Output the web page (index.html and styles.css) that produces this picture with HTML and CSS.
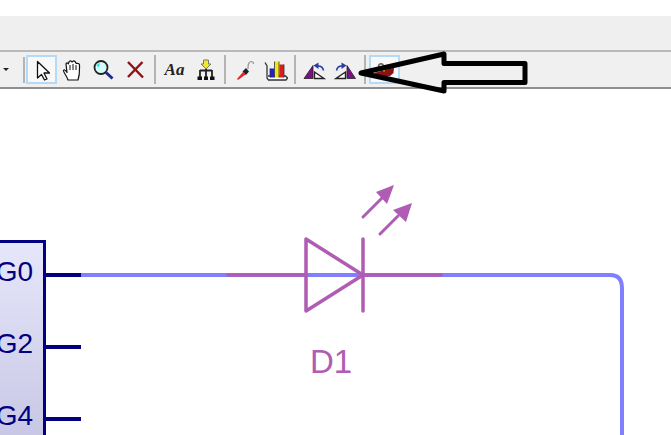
FILE: index.html
```html
<!DOCTYPE html>
<html lang="en">
<head>
  <meta charset="UTF-8">
  <title>LED schematic</title>
  <link rel="stylesheet" href="styles.css">
</head>
<body>
<div class="window">
  <div class="top-gap"></div>
  <div class="menu-band"></div>

  <div class="toolbar">
    <span class="drop-arrow"></span>
    <span class="grip"></span>

    <button class="tool tool-on">
      <svg width="16" height="22" viewBox="0 0 16 22"><path d="M3.500 2.500V19L7.500 15.500L10.500 21L13 20L10 14H15.500Z" fill="#fff" stroke="#111" stroke-width="1.300" stroke-linejoin="round"/></svg>
    </button>
    <button class="tool">
      <svg width="22" height="24" viewBox="0 0 22 24"><path d="M6 22C5 18 1 14 1.500 12.500C2.500 11 4 13 5 14.500L4 6C4 4.500 6 4.500 6.300 6L7 4C7.500 2.500 9.500 2.500 10 4L10.800 3.500C11.500 2.500 13.500 3 13.500 4.500L14.500 5.500C15.500 5 17.500 5.500 17.500 7C17.500 12 18 16 16 22Z" fill="#fff" stroke="#111" stroke-width="1.200" stroke-linejoin="round"/><path d="M8 7V12M11 6V12M14 7V12" stroke="#111" stroke-width="1"/></svg>
    </button>
    <button class="tool">
      <svg width="22" height="24" viewBox="0 0 22 24"><circle cx="8" cy="9.500" r="6.500" fill="#d6fbfb" stroke="#222" stroke-width="1.800"/><path d="M3.500 8C4 6.500 5.500 5.300 7 5L6 9Z" fill="#25e0e8"/><path d="M13 14.500L19.500 20.500" stroke="#1a2a8c" stroke-width="3"/></svg>
    </button>
    <button class="tool">
      <svg width="20" height="22" viewBox="0 0 20 22"><path d="M3 3L18 18.500M17.500 3L3 18" stroke="#8f1418" stroke-width="2.500"/></svg>
    </button>
    <span class="sep sep-first"></span>

    <button class="tool"><span class="aa">Aa</span></button>
    <button class="tool">
      <svg width="22" height="24" viewBox="0 0 22 24"><path d="M8.500 2H13.500V6H16L11 11L6 6H8.500Z" fill="#f5e62a" stroke="#777" stroke-width="1"/><path d="M5 12V19M11 11V19M17 12V19M5 12.500H17" stroke="#222" stroke-width="1.800"/><path d="M2.500 18.500H7V22H2.500ZM9 18.500H13V22H9ZM15 18.500H19.500V22H15Z" fill="#111"/></svg>
    </button>
    <span class="sep"></span>

    <button class="tool">
      <svg width="20" height="24" viewBox="0 0 20 24"><path d="M2 21L8 14L10.500 16.500L3 22Z" fill="#e8232a"/><path d="M7.500 13.500L11 17L14 13.500L11 10Z" fill="#222"/><path d="M13 11C13 7 13 4 16 3.500C18 3.500 18.500 5 18.500 6" fill="none" stroke="#999" stroke-width="1.200"/></svg>
    </button>
    <button class="tool">
      <svg width="24" height="24" viewBox="0 0 24 24"><path d="M1 4.500L3 8V20L4.500 22H22L23.500 20L21.500 18H4" fill="#fff" stroke="#333" stroke-width="1.300"/><rect x="6" y="10.500" width="4.500" height="9" fill="#1f1fd8"/><rect x="10.500" y="3.500" width="4.500" height="16" fill="#f2e51c"/><rect x="15.500" y="6.500" width="4.500" height="13" fill="#d81f1f"/><path d="M6 19.500V10.500M10.500 19.500V3.500M15 19.500V3.500M20 19.500V6.500" stroke="#333" stroke-width=".8"/></svg>
    </button>
    <span class="sep"></span>

    <button class="tool">
      <svg width="24" height="24" viewBox="0 0 24 24"><path d="M1 20.500L10 7.500V20.500Z" fill="#7a0f86" stroke="#222" stroke-width=".8"/><path d="M11.500 20.500V14L21 20.500Z" fill="#fff" stroke="#222" stroke-width="1.400"/><path d="M20.500 12.500C20 9.500 18 8 15 8" fill="none" stroke="#2c3aa8" stroke-width="1.600"/><path d="M15.500 4.500L10.500 7.500L15.500 11Z" fill="#2c3aa8"/></svg>
    </button>
    <button class="tool">
      <svg width="24" height="24" viewBox="0 0 24 24"><path d="M21.500 20.500L13 7.500V20.500Z" fill="#7a0f86" stroke="#222" stroke-width=".8"/><path d="M11.500 20.500V14L2 20.500Z" fill="#fff" stroke="#222" stroke-width="1.400"/><path d="M2.500 12.500C3 9.500 5 8 8 8" fill="none" stroke="#2c3aa8" stroke-width="1.600"/><path d="M7.500 4.500L12.500 7.500L7.500 11Z" fill="#2c3aa8"/></svg>
    </button>
    <span class="sep"></span>

    <button class="tool tool-on">
      <svg width="24" height="22" viewBox="0 0 24 22"><path d="M5.500 8C5.500 3.500 10.500 3.500 10.500 8" fill="none" stroke="#666" stroke-width="1.500"/><path d="M1 14L21 8.500L20.500 14L17 17H6Z" fill="#8f1010"/><circle cx="11" cy="11.500" r="1" fill="#e8e020"/></svg>
    </button>
  </div>

  <div class="canvas">
    <div class="chip">
      <div class="pin"><span class="pin-name">G0</span><span class="pin-lead"></span></div>
      <div class="pin"><span class="pin-name">G2</span><span class="pin-lead"></span></div>
      <div class="pin"><span class="pin-name">G4</span><span class="pin-lead"></span></div>
    </div>

    <svg class="wires" width="671" height="346" viewBox="0 89 671 346">
      <path d="M81 275H610Q622 275 622 288V435" fill="none" stroke="#8080ff" stroke-width="4"/>
      <g fill="none" stroke="#b05cb4" stroke-width="3.500" stroke-linecap="round" stroke-linejoin="round">
        <path d="M228 275H305M363 275H441"/>
        <path d="M306 239V311L363 275Z"/>
        <path d="M363 239V311"/>
        <path d="M363 217L382 198M380 234L398 216" stroke-width="3"/>
      </g>
      <path d="M394 185L376 192L387 204ZM412 203L393 210L406 222Z" fill="#b05cb4"/>
      <text class="ref" x="310" y="373">D1</text>
    </svg>
  </div>

  <svg class="callout" width="180" height="50" viewBox="355 50 180 50">
    <path d="M361 73L444 54V63.500H525V82.500H444V91Z" fill="none" stroke="#000" stroke-width="5" stroke-linejoin="round"/>
  </svg>
</div>
</body>
</html>
```

FILE: styles.css
```css
html, body {
  margin: 0;
  padding: 0;
  background-color: #fff;
}

.window {
  position: relative;
  width: 671px;
  height: 435px;
  overflow: hidden;
  font-family: "Liberation Sans", Arial, sans-serif;
}

.top-gap {
  height: 16px;
  background-color: #fff;
}

.menu-band {
  height: 34px;
  background-color: #efefef;
}

.toolbar {
  display: flex;
  align-items: center;
  box-sizing: border-box;
  height: 39px;
  padding-left: 3px;
  background-color: #f0f0f0;
  border-top: 2px solid #b9b9b9;
  border-bottom: 2px solid #8f8f8f;
}

.drop-arrow {
  flex: none;
  width: 0;
  height: 0;
  margin-right: 14px;
  border-left: 3px solid transparent;
  border-right: 3px solid transparent;
  border-top: 3px solid #222;
}

.grip {
  flex: none;
  width: 2px;
  height: 26px;
  margin-right: 1px;
  background-color: #b4b4b4;
}

.sep {
  flex: none;
  width: 2px;
  height: 29px;
  margin: 0 3px;
  background-color: #b4b4b4;
}

.sep-first {
  margin-left: 4px;
}

.tool {
  display: flex;
  align-items: center;
  justify-content: center;
  flex: none;
  box-sizing: border-box;
  width: 31px;
  height: 29px;
  padding: 0;
  background: none;
  border: 2px solid transparent;
}

.tool-on {
  background-color: #f8f8f8;
  border-color: #b5daf7;
}

.aa {
  font-family: "Liberation Serif", serif;
  font-size: 17px;
  font-weight: bold;
  font-style: italic;
  color: #222;
}

.canvas {
  position: relative;
  box-sizing: border-box;
  height: 346px;
  padding-top: 151px;
  background-color: #fff;
}

.chip {
  box-sizing: border-box;
  width: 46px;
  height: 195px;
  padding-top: 19px;
  background: linear-gradient(#e6e6fb, #c8c8e6);
  border-top: 3px solid #000080;
  border-right: 3px solid #000080;
}

.pin {
  display: flex;
  align-items: center;
  justify-content: flex-end;
  position: relative;
  height: 26px;
  margin-bottom: 46px;
  padding-right: 10px;
}

.pin-name {
  flex: none;
  margin-bottom: 6px;
  font-size: 28px;
  color: #000080;
}

.pin-lead {
  position: absolute;
  left: 43px;
  top: 11px;
  width: 38px;
  height: 4px;
  background-color: #000080;
}

.wires {
  position: absolute;
  left: 0;
  top: 0;
}

.ref {
  font-family: "Liberation Sans", Arial, sans-serif;
  font-size: 33px;
  fill: #b05cb4;
}

.callout {
  position: absolute;
  left: 355px;
  top: 50px;
}
```
